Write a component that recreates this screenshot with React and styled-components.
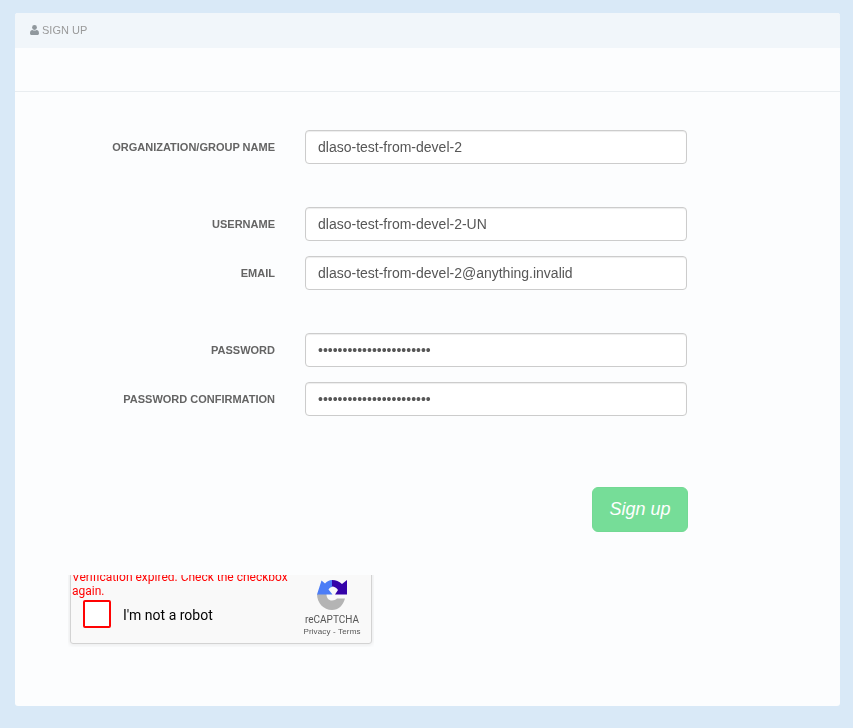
import React from 'react'
import styled, { createGlobalStyle } from 'styled-components'

const fields = [
  [
    { label: 'Organization/Group name', type: 'text', value: 'dlaso-test-from-devel-2' },
  ],
  [
    { label: 'Username', type: 'text', value: 'dlaso-test-from-devel-2-UN' },
    { label: 'Email', type: 'text', value: 'dlaso-test-from-devel-2@anything.invalid' },
  ],
  [
    { label: 'Password', type: 'password', value: 'abcdefghijklmnopqrstuvw' },
    { label: 'Password confirmation', type: 'password', value: 'abcdefghijklmnopqrstuvw' },
  ],
]

const App = () => {
  return (
    <Page>
      <GlobalStyle />
      <Card>
        <CardHeader>
          <svg width="9" height="10" viewBox="0 0 9 10" fill="#8f979c">
            <circle cx="4.5" cy="2.5" r="2.4" />
            <path d="M0 8.2C0 6 1.2 4.9 2.4 4.9c.6.4 1.3.7 2.1.7s1.500-.3 2.100-.7C7.800 4.900 9 6 9 8.200 9 9.300 8.300 10 7.400 10H1.600C.7 10 0 9.300 0 8.200z" />
          </svg>
          <HeaderTitle>SIGN UP</HeaderTitle>
        </CardHeader>
        <Toolbar />
        <Form>
          {fields.map((group, i) => (
            <FieldGroup key={i}>
              {group.map((field) => (
                <Row key={field.label}>
                  <Label>{field.label}</Label>
                  <Input type={field.type} value={field.value} readOnly />
                </Row>
              ))}
            </FieldGroup>
          ))}
          <Actions>
            <SubmitButton type="button">Sign up</SubmitButton>
          </Actions>
          <CaptchaClip>
            <Captcha>
              <CaptchaError>Verification expired. Check the checkbox again.</CaptchaError>
              <CaptchaBody>
                <CheckBox />
                <CaptchaText>I'm not a robot</CaptchaText>
                <CaptchaBrand>
                  <svg width="30" height="30" viewBox="0 0 30 30">
                    <path fill="#b4b4b4" d="M0 14H9.500C9.500 18 11.500 20.500 15 20.500 17 20.500 19 19.500 20 18.500H28C26 25.500 21.500 30 15 30 6.700 30 0 23 0 14z" />
                    <path fill="#4a7cf6" d="M4.500 0.500L8 3.500C10 1.500 12.500 0 15 0V7C13.500 7 12.500 8 11.500 9.500L15.500 14.500H0z" />
                    <path fill="#3300a8" d="M15 0C19 0 22 1.500 25 4L30 0V14.500H18L21 10C19.500 8 17.500 6.500 15 6.500z" />
                  </svg>
                  <BrandName>reCAPTCHA</BrandName>
                  <BrandLinks>Privacy - Terms</BrandLinks>
                </CaptchaBrand>
              </CaptchaBody>
            </Captcha>
          </CaptchaClip>
        </Form>
      </Card>
    </Page>
  )
}

const GlobalStyle = createGlobalStyle`
  html, body {
    margin: 0;
    padding: 0;
    background: #d9e9f7;
    font-family: "Liberation Sans", Arial, sans-serif;
  }
`

const Page = styled.div`
  box-sizing: border-box;
  height: 728px;
  padding: 13px 13px 22px 15px;
  overflow: hidden;
`

const Card = styled.div`
  height: 693px;
  background: #fcfdfe;
  border-radius: 3px;
  overflow: hidden;
  opacity: 0.99;
`

const CardHeader = styled.div`
  box-sizing: border-box;
  display: flex;
  align-items: center;
  gap: 3px;
  height: 35px;
  padding: 0 0 1px 15px;
  background: #f1f6fa;
`

const HeaderTitle = styled.span`
  font-size: 11px;
  color: #999;
`

const Toolbar = styled.div`
  height: 43px;
  border-bottom: 1px solid #e9edf0;
`

const Form = styled.form`
  display: flex;
  flex-direction: column;
  padding-top: 38px;
`

const FieldGroup = styled.div`
  display: flex;
  flex-direction: column;
  gap: 15px;
  margin-bottom: 43px;
`

const Row = styled.div`
  display: flex;
  align-items: center;
  gap: 30px;
`

const Label = styled.label`
  width: 260px;
  text-align: right;
  font-size: 11px;
  font-weight: 700;
  text-transform: uppercase;
  color: #636363;
`

const Input = styled.input`
  box-sizing: border-box;
  width: 382px;
  height: 34px;
  padding: 0 12px;
  background: #fff;
  border: 1px solid #ccc;
  border-radius: 4px;
  box-shadow: inset 0 1px 1px rgba(0, 0, 0, 0.075);
  font-family: "Liberation Sans", Arial, sans-serif;
  font-size: 14px;
  color: #555;
  outline: none;
`

const Actions = styled.div`
  display: flex;
  justify-content: flex-end;
  width: 673px;
  margin-top: 28px;
`

const SubmitButton = styled.button`
  width: 96px;
  height: 45px;
  padding: 0;
  background: #75dd97;
  border: 1px solid #72d993;
  border-radius: 6px;
  font-family: "Liberation Sans", Arial, sans-serif;
  font-size: 18px;
  font-style: italic;
  color: #fff;
`

const CaptchaClip = styled.div`
  display: flex;
  flex-direction: column;
  justify-content: flex-end;
  width: 306px;
  height: 72px;
  margin: 43px 0 0 53px;
  padding: 0 2px 3px;
  box-sizing: border-box;
  overflow: hidden;
`

const Captcha = styled.div`
  position: relative;
  flex-shrink: 0;
  box-sizing: border-box;
  height: 84px;
  background: #f9f9f9;
  border: 1px solid #d3d3d3;
  border-radius: 3px;
  box-shadow: 0 0 4px 1px rgba(0, 0, 0, 0.08);
`

const CaptchaError = styled.div`
  position: absolute;
  top: 9px;
  left: 1px;
  width: 240px;
  font-family: Roboto, sans-serif;
  font-size: 12px;
  line-height: 14px;
  color: #f00;
`

const CaptchaBody = styled.div`
  display: flex;
  align-items: flex-end;
  height: 100%;
  padding: 0 10px 5px 12px;
  box-sizing: border-box;
`

const CheckBox = styled.div`
  box-sizing: border-box;
  width: 28px;
  height: 28px;
  margin-bottom: 10px;
  background: #fff;
  border: 2px solid #f00;
  border-radius: 2px;
`

const CaptchaText = styled.span`
  flex: 1;
  margin: 0 0 13px 12px;
  font-family: Roboto, sans-serif;
  font-size: 14px;
  line-height: 20px;
  color: #000;
`

const CaptchaBrand = styled.div`
  display: flex;
  flex-direction: column;
  align-items: center;
  width: 58px;
`

const BrandName = styled.div`
  margin-top: 4px;
  font-family: Roboto, sans-serif;
  font-size: 10px;
  line-height: 12px;
  color: #555;
`

const BrandLinks = styled.div`
  font-family: "Liberation Sans", Arial, sans-serif;
  font-size: 8px;
  line-height: 12px;
  letter-spacing: 0.15px;
  color: #555;
  white-space: nowrap;
`

export default App
